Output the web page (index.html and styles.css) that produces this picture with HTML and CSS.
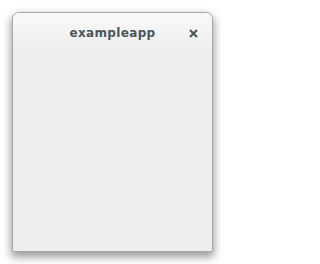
FILE: index.html
```html
<!DOCTYPE html>
<html>
<head>
<meta charset="utf-8">
<link rel="stylesheet" href="styles.css">
</head>
<body>
<div class="window">
  <div class="headerbar">
    <span class="spacer"></span>
    <span class="title">exampleapp</span>
    <button class="close" aria-label="Close">
      <svg width="9" height="9" viewBox="0 0 9 9"><path d="M1 1 L8 8 M8 1 L1 8" stroke="#4a5a61" stroke-width="2.2" stroke-linecap="butt" fill="none"/></svg>
    </button>
  </div>
  <div class="content"></div>
</div>
</body>
</html>
```
FILE: styles.css
```css
html, body {
  margin: 0;
  padding: 0;
  background: #ffffff;
}
body {
  width: 226px;
  height: 264px;
  overflow: hidden;
  font-family: "DejaVu Sans", sans-serif;
}
.window {
  box-sizing: border-box;
  margin: 12px 0 0 12px;
  width: 201px;
  height: 240px;
  border: 1px solid #a9a9a9;
  border-radius: 7px 7px 0 0;
  background: #ededed;
  display: flex;
  flex-direction: column;
  box-shadow: 0 4px 8px 1px rgba(0, 0, 0, 0.4);
  overflow: hidden;
}
.headerbar {
  height: 40px;
  flex: none;
  display: grid;
  grid-template-columns: 1fr auto 1fr;
  align-items: center;
  background: linear-gradient(to bottom, #f9f9f9 0%, #ededed 100%);
}
.title {
  font-weight: bold;
  font-size: 12px;
  letter-spacing: 0.35px;
  color: #4a575d;
}
.close {
  justify-self: end;
  margin-right: 14px;
  width: 9px;
  height: 9px;
  padding: 0;
  border: 0;
  background: none;
  display: flex;
}
.content {
  flex: 1;
}
```
